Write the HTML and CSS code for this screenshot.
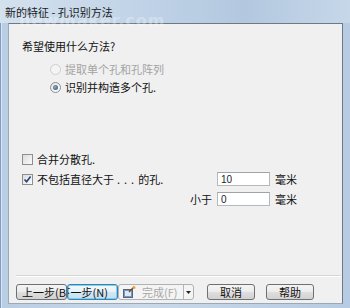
FILE: index.html
```html
<!DOCTYPE html>
<html lang="zh-CN">

<head>
    <meta charset="UTF-8">
    <title>新的特征 - 孔识别方法</title>
    <link rel="stylesheet" href="styles.css">
</head>

<body>
    <div class="window">
        <div class="titlebar">
            <span class="title">新的特征 - 孔识别方法</span>
            <span class="watermark">newmaker.com</span>
        </div>
        <div class="frame">
            <div class="client">
                <div class="question">希望使用什么方法?</div>

                <div class="options">
                    <label class="option disabled"><span class="radio"></span>提取单个孔和孔阵列</label>
                    <label class="option"><span class="radio checked"></span>识别并构造多个孔.</label>
                </div>

                <div class="settings">
                    <label class="check-label wide"><span class="checkbox"></span>合并分散孔.</label>
                    <label class="check-label span2">
                        <span class="checkbox">
                            <svg width="9" height="9" viewBox="0 0 9 9"><path d="M1.5 4.5 L3.6 6.8 L7.6 1.6" fill="none" stroke="#21427a" stroke-width="1.6"/></svg>
                        </span>
                        <span>不包括直径大于<span class="dots">...</span>的孔.</span>
                    </label>
                    <input class="field" type="text" value="10">
                    <span class="unit">毫米</span>
                    <span class="field-label">小于</span>
                    <input class="field" type="text" value="0">
                    <span class="unit">毫米</span>
                </div>

                <div class="footer">
                    <button class="btn btn-back">上一步(B)</button>
                    <button class="btn btn-next">下一步(N)</button>
                    <button class="btn btn-finish" disabled>
                        <svg class="finish-icon" width="13" height="12" viewBox="0 0 13 12">
                            <rect x="0.5" y="3.5" width="9" height="8" fill="#7d97b8" stroke="#4d6686"/>
                            <rect x="2" y="5" width="6" height="5" fill="#dfe8f2"/>
                            <path d="M6 6 L11 1" stroke="#6b4a2a" stroke-width="1.4"/>
                            <circle cx="11" cy="1.5" r="1.5" fill="#f0a030"/>
                        </svg>
                        <span class="finish-text">完成(F)</span>
                        <span class="split">
                            <svg width="5" height="3" viewBox="0 0 5 3"><path d="M0 0 H5 L2.5 3 Z" fill="#222"/></svg>
                        </span>
                    </button>
                    <button class="btn btn-cancel">取消</button>
                    <button class="btn btn-help">帮助</button>
                </div>
            </div>
        </div>
    </div>
</body>

</html>
```

FILE: styles.css
```css
/* Window frame */
html,
body {
    margin: 0;
    width: 350px;
    height: 308px;
    overflow: hidden;
}

body {
    font-family: "Noto Sans CJK SC", "Liberation Sans", sans-serif;
    font-size: 11px;
    color: #111;
}

.window {
    display: flex;
    flex-direction: column;
    height: 308px;
    background: linear-gradient(to right, #b9cde3, #c9d9ea 40%, #b7cbe2);
    box-shadow: inset 1px 0 0 #7b9cc4, inset 2px 0 0 #dbe6f2;
}

.titlebar {
    position: relative;
    height: 23px;
    line-height: 24px;
    padding-left: 5px;
    color: #1b1b1b;
    background: linear-gradient(to right, #d4e1ee 0%, #bed1e6 45%, #b3c8df 70%, #c6d7e9 100%);
}

.title {
    position: relative;
    z-index: 1;
}

.watermark {
    position: absolute;
    z-index: 2;
    left: 19px;
    top: 13px;
    line-height: 16px;
    font-family: "DejaVu Sans", sans-serif;
    font-size: 16px;
    font-weight: bold;
    letter-spacing: 1px;
    color: rgba(255, 255, 255, 0.3);
}

.frame {
    flex: 1;
    display: flex;
    padding: 0 7px 4px 8px;
}

.client {
    flex: 1;
    display: flex;
    flex-direction: column;
    background-color: #f0f0f0;
    border: 1px solid #6f7985;
    border-left-color: #9aa8b7;
    border-bottom-color: #9aa8b7;
}

/* Question and radio options */
.question {
    padding: 15px 0 0 13px;
    line-height: 14px;
}

.options {
    display: flex;
    flex-direction: column;
    margin-top: 7px;
    padding-left: 41px;
}

.option {
    display: flex;
    align-items: center;
    height: 18px;
    gap: 4px;
}

.option.disabled {
    color: #a3a3a3;
}

.radio {
    position: relative;
    width: 9px;
    height: 9px;
    border: 1px solid #8d8d8d;
    border-radius: 50%;
    background: linear-gradient(135deg, #e4e4e4, #ffffff);
}

.option.disabled .radio {
    border-color: #cfcfcf;
    background: #f4f4f4;
}

.radio.checked::after {
    content: "";
    position: absolute;
    left: 2px;
    top: 2px;
    width: 5px;
    height: 5px;
    border-radius: 50%;
    background: radial-gradient(circle at 40% 40%, #8fa7c7, #30496e);
}

/* Checkboxes and fields */
.settings {
    display: grid;
    grid-template-columns: 1fr auto 53px 30px;
    grid-auto-rows: 20px;
    column-gap: 5px;
    align-items: center;
    margin-top: 53px;
    padding: 0 37px 0 13px;
}

.check-label {
    display: flex;
    align-items: center;
    gap: 4px;
    white-space: nowrap;
}

.check-label.wide {
    grid-column: 1 / 5;
}

.check-label.span2 {
    grid-column: 1 / 3;
}

.checkbox {
    display: flex;
    align-items: center;
    justify-content: center;
    width: 9px;
    height: 9px;
    border: 1px solid #8e8f8f;
    background: linear-gradient(135deg, #dcdcdc, #fbfbfb);
}

.dots {
    letter-spacing: 4px;
    margin-left: 3px;
}

.field {
    box-sizing: border-box;
    width: 53px;
    height: 14px;
    padding: 0 0 0 3px;
    border: 1px solid #b5b8bd;
    border-top-color: #9ea3a9;
    background: #fff;
    font-family: "Liberation Sans", sans-serif;
    font-size: 10px;
    color: #222;
}

.field-label {
    grid-column: 2;
    justify-self: end;
}

.unit {
    grid-column: 4;
}

/* Wizard buttons */
.footer {
    display: flex;
    margin: auto 1px 0 7px;
    padding: 8px 0 3px 0;
    border-top: 1px solid #d7d7d7;
    box-shadow: inset 0 1px 0 #ffffff;
}

.btn {
    display: flex;
    align-items: center;
    height: 16px;
    padding: 0;
    border: 1px solid #707070;
    border-radius: 3px;
    background: linear-gradient(#f4f4f4 0%, #ececec 48%, #dedede 52%, #d2d2d2 100%);
    font-family: inherit;
    font-size: 11px;
    color: #111;
    white-space: nowrap;
    overflow: hidden;
    justify-content: center;
}

.btn-back {
    width: 51px;
    justify-content: flex-start;
    padding-left: 5px;
}

.btn-next {
    width: 51px;
    justify-content: flex-end;
    padding-right: 9px;
    border-color: #3c7fb1;
    box-shadow: inset 0 0 0 1px #7ed0f0;
    background: linear-gradient(#f3f9fc 0%, #e6f2f9 48%, #d3e7f3 52%, #c4dff0 100%);
}

.btn-finish {
    width: 76px;
    justify-content: flex-start;
    padding-left: 4px;
    border-color: #adb2b5;
    background: #f4f4f4;
    color: #a7a7a7;
}

.finish-icon {
    flex-shrink: 0;
}

.finish-text {
    margin-left: 6px;
}

.split {
    display: flex;
    align-items: center;
    justify-content: center;
    margin-left: auto;
    width: 9px;
    height: 100%;
    border-left: 1px solid #b5b5b5;
}

.btn-cancel {
    width: 48px;
    margin-left: 13px;
}

.btn-help {
    width: 48px;
    margin-left: 11px;
}
```
